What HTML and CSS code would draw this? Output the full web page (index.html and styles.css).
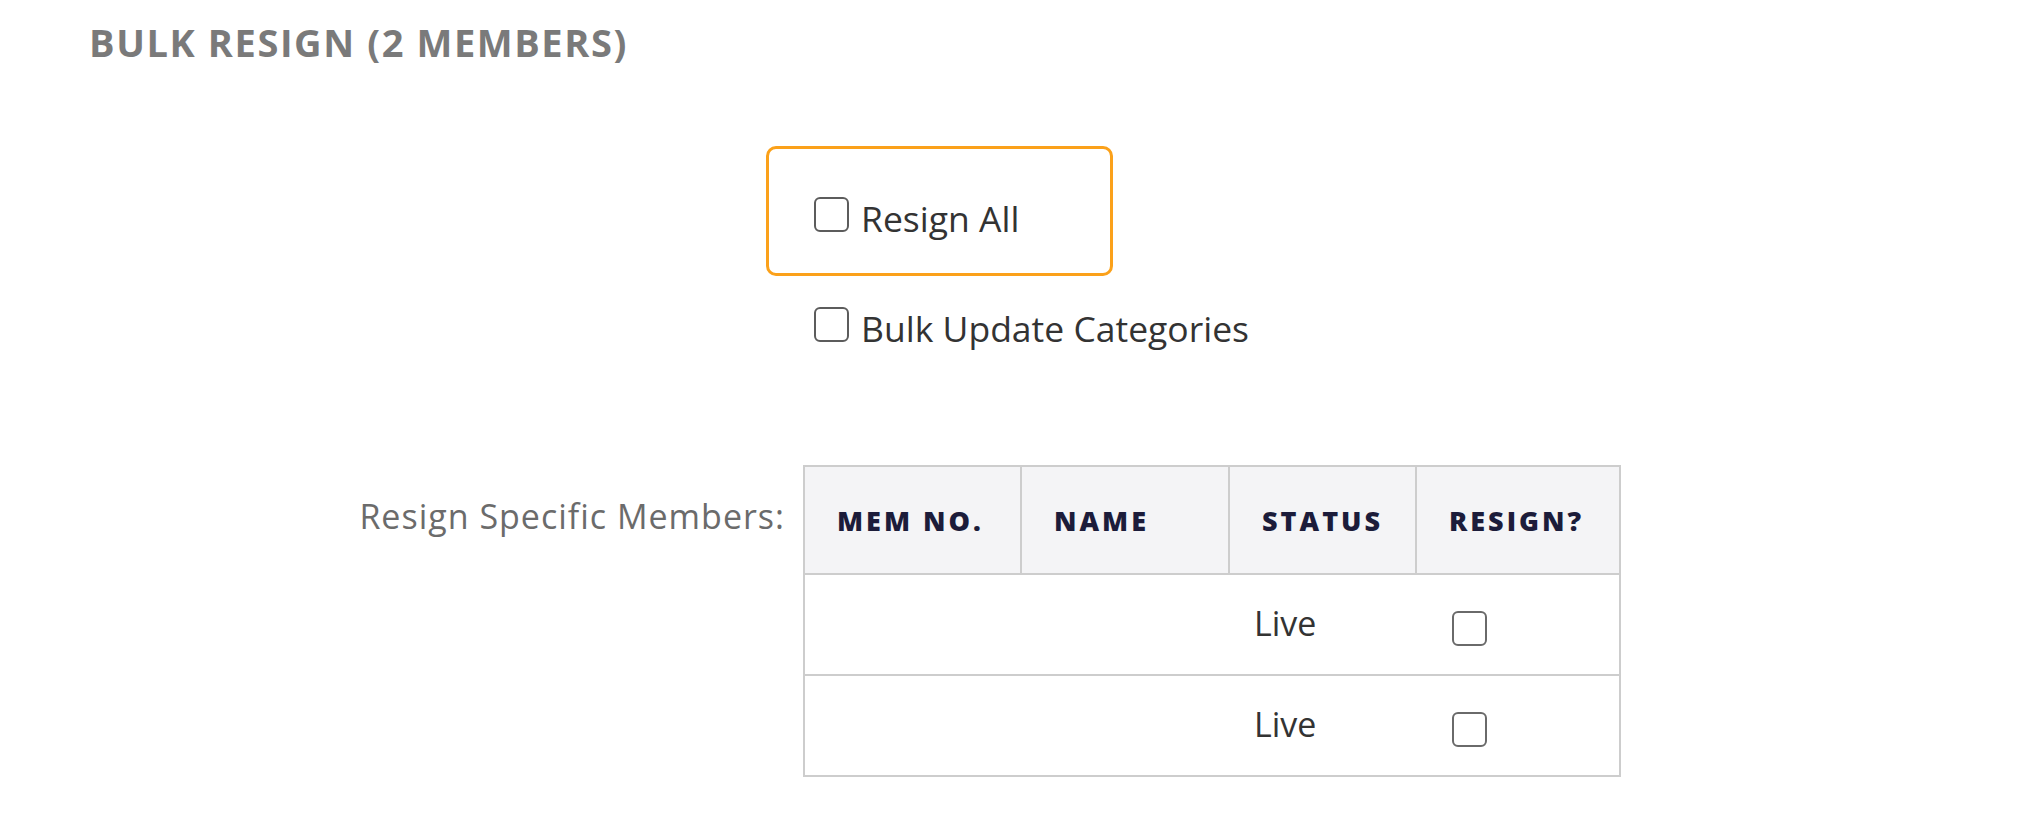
FILE: index.html
```html
<!DOCTYPE html>
<html lang="en">
<head>
<meta charset="utf-8">
<title>Bulk Resign</title>
<link rel="stylesheet" href="styles.css">
</head>
<body>
<main class="panel">
  <h2 class="title">BULK RESIGN (2 MEMBERS)</h2>

  <div class="options">
    <label class="opt opt--highlight">
      <input type="checkbox" class="check">
      <span class="opt-text">Resign All</span>
    </label>
    <label class="opt">
      <input type="checkbox" class="check">
      <span class="opt-text">Bulk Update Categories</span>
    </label>
  </div>

  <div class="specific">
    <div class="specific-label">Resign Specific Members:</div>
    <table class="members">
      <colgroup>
        <col class="c-num">
        <col class="c-name">
        <col class="c-status">
        <col class="c-resign">
      </colgroup>
      <thead>
        <tr>
          <th>MEM NO.</th>
          <th>NAME</th>
          <th>STATUS</th>
          <th>RESIGN?</th>
        </tr>
      </thead>
      <tbody>
        <tr>
          <td></td>
          <td></td>
          <td>Live</td>
          <td><input type="checkbox" class="check check--row"></td>
        </tr>
        <tr>
          <td></td>
          <td></td>
          <td>Live</td>
          <td><input type="checkbox" class="check check--row"></td>
        </tr>
      </tbody>
    </table>
  </div>
</main>
</body>
</html>
```

FILE: styles.css
```css
* { box-sizing: border-box; }

html, body {
  margin: 0;
  padding: 0;
  background: #ffffff;
}

body {
  font-family: "Open Sans", "Noto Sans", "Liberation Sans", sans-serif;
  color: #333333;
}

.panel {
  padding-top: 18px;
}

.title {
  margin: 0 0 0 89px;
  font-size: 38px;
  line-height: 48px;
  font-weight: 700;
  letter-spacing: 1.6px;
  color: #7a7a7a;
}

.options {
  margin: 80px 0 0 766px;
  display: flex;
  flex-direction: column;
  align-items: flex-start;
}

.opt {
  display: flex;
  align-items: center;
  padding-left: 48px;
  font-size: 35.5px;
  line-height: 46px;
  white-space: nowrap;
  color: #333333;
  cursor: pointer;
}

.opt--highlight {
  width: 347px;
  height: 130px;
  padding-left: 45px;
  padding-top: 14px;
  border: 3px solid #fba11a;
  border-radius: 10px;
}

.opt + .opt {
  margin-top: 29px;
}

.check {
  appearance: none;
  -webkit-appearance: none;
  flex: none;
  width: 35px;
  height: 35px;
  margin: 0 12px 8px 0;
  border: 2px solid #5c5c5c;
  border-radius: 6px;
  background: #ffffff;
}

.check--row {
  margin: 1px 0 0 11px;
  border-color: #6a6a6a;
  vertical-align: middle;
}

.specific {
  display: flex;
  align-items: flex-start;
  margin-top: 114px;
}

.specific-label {
  flex: none;
  width: 785px;
  padding-top: 28px;
  text-align: right;
  font-size: 34px;
  line-height: 46px;
  letter-spacing: 1px;
  color: #6b6b6b;
}

.members {
  margin-left: 18px;
  width: 816px;
  table-layout: fixed;
  border-collapse: collapse;
  border: 2px solid #cdcdcd;
}

.c-num { width: 217px; }
.c-name { width: 208px; }
.c-status { width: 187px; }
.c-resign { width: 204px; }

.members th {
  height: 108px;
  padding: 0 0 0 32px;
  text-align: left;
  background: #f4f4f6;
  border: 2px solid #cdcdcd;
  font-size: 27px;
  font-weight: 800;
  letter-spacing: 3px;
  color: #1c1c3a;
}

.members td {
  height: 101px;
  padding: 0 0 4px 25px;
  border-top: 2px solid #cdcdcd;
  font-size: 34px;
  color: #333333;
  vertical-align: middle;
}

.members td .check--row {
  margin-top: 5px;
}
```
